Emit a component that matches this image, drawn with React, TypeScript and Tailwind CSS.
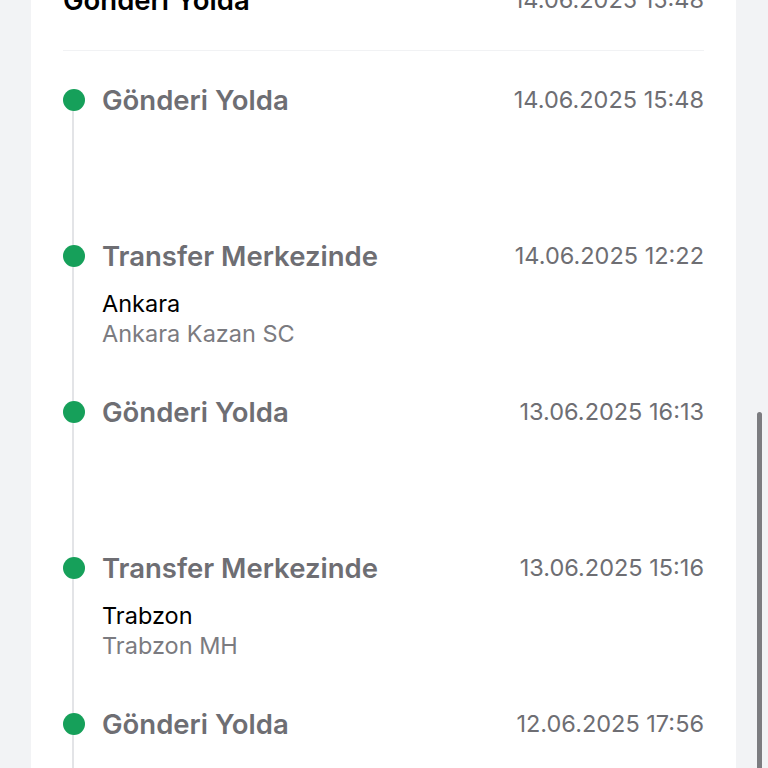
import React from "react";

type Step = {
	title: string;
	date: string;
	city?: string;
	place?: string;
};

const steps: Step[] = [
	{ title: "Gönderi Yolda", date: "14.06.2025 15:48" },
	{
		title: "Transfer Merkezinde",
		date: "14.06.2025 12:22",
		city: "Ankara",
		place: "Ankara Kazan SC",
	},
	{ title: "Gönderi Yolda", date: "13.06.2025 16:13" },
	{
		title: "Transfer Merkezinde",
		date: "13.06.2025 15:16",
		city: "Trabzon",
		place: "Trabzon MH",
	},
	{ title: "Gönderi Yolda", date: "12.06.2025 17:56" },
];

const App: React.FC = () => {
	return (
		<div
			className="relative h-[768px] w-[768px] overflow-hidden bg-[#f2f3f5]"
			style={{ fontFamily: "Inter, 'Noto Sans', sans-serif" }}
		>
			<div className="ml-[31px] mt-[-23px] w-[705px] bg-white px-[32px]">
				{/* previous header row, scrolled out */}
				<div className="flex h-[74px] items-start justify-between pt-[8px] border-b border-[#f1f2f4]">
					<span className="text-[27.5px] font-semibold text-black leading-[30px]">
						Gönderi Yolda
					</span>
					<span className="text-[23.5px] text-[#6e6e73] leading-[30px]">
						14.06.2025 15:48
					</span>
				</div>

				{/* timeline */}
				<div className="relative pt-[27px]">
					<div className="absolute left-[9px] top-[52px] bottom-0 w-[2px] bg-[#e3e4e7]" />
					{steps.map((s, i) => (
						<div key={i} className="relative flex h-[156px] items-start">
							<div className="mt-[11px] h-[22px] w-[22px] shrink-0 rounded-full bg-[#16a05a]" />
							<div className="ml-[17px] flex-1">
								<div className="flex items-start justify-between">
									<span className="text-[27.5px] font-semibold text-[#6e6e73] leading-[44px]">
										{s.title}
									</span>
									<span className="text-[23.5px] text-[#6e6e73] leading-[44px]">
										{s.date}
									</span>
								</div>
								{s.city && (
									<div className="mt-[11px]">
										<div className="text-[23.5px] text-black leading-[30px]">
											{s.city}
										</div>
										<div className="text-[23.5px] text-[#7b7b80] leading-[30px]">
											{s.place}
										</div>
									</div>
								)}
							</div>
						</div>
					))}
				</div>
			</div>

			{/* overlay scrollbar */}
			<div className="absolute left-[757px] top-[412px] h-[380px] w-[5px] rounded-full bg-[#7c7c80]" />
		</div>
	);
};

export default App;
